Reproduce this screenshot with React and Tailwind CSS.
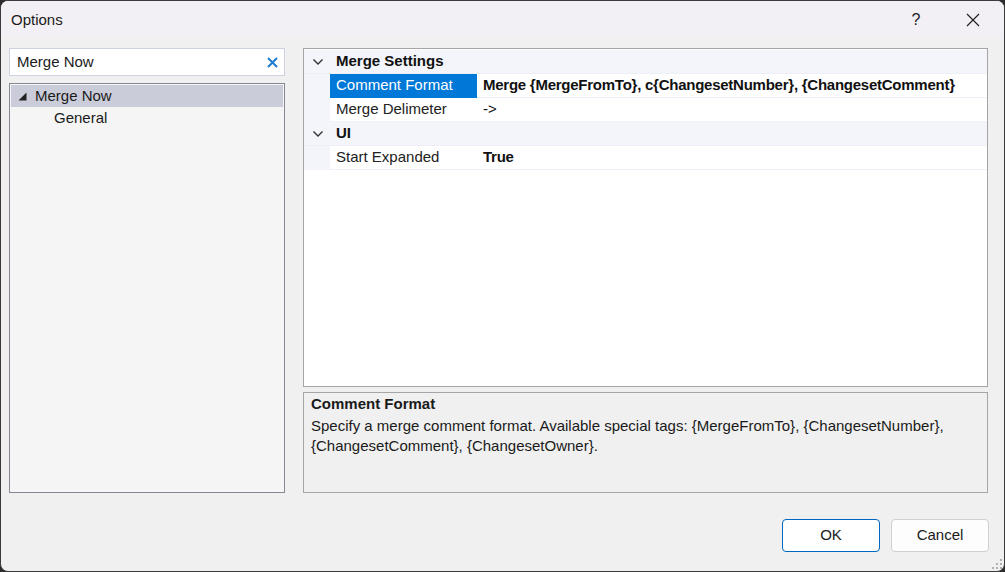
import React from 'react';

const FONT = { fontFamily: '"Liberation Sans", Arial, sans-serif' };

function Chevron() {
  return (
    <svg width="12" height="8" viewBox="0 0 12 8" className="text-[#333]">
      <path d="M1.5 1.5 L6 6 L10.5 1.5" fill="none" stroke="currentColor" strokeWidth="1.4" />
    </svg>
  );
}

function CategoryRow({ label }) {
  return (
    <div className="flex h-[24px] items-center bg-[#f3f5fa] border-b border-[#eceff6]">
      <div className="w-[26px] shrink-0 flex items-center justify-center pl-[2px]">
        <Chevron />
      </div>
      <div className="pl-[6px] font-bold text-[15px] text-[#111]">{label}</div>
    </div>
  );
}

function PropRow({ name, value, selected, bold }) {
  return (
    <div className="flex h-[24px] items-stretch">
      <div className="w-[26px] shrink-0 bg-[#f3f5fa]" />
      <div
        className={
          selected
            ? 'w-[147px] shrink-0 flex items-center pl-[6px] bg-[#0078d7] text-white border-b border-[#0078d7]'
            : 'w-[147px] shrink-0 flex items-center pl-[6px] text-[#222] border-b border-[#eef1f7]'
        }
      >
        {name}
      </div>
      <div
        className={
          'flex-1 flex items-center pl-[6px] border-b border-[#eef1f7] text-[#111] ' +
          (bold ? 'font-bold tracking-[-0.25px]' : '')
        }
      >
        {value}
      </div>
    </div>
  );
}

export default function App() {
  return (
    <div className="w-[1005px] h-[572px] bg-[#2b2b2b]" style={FONT}>
      <div className="w-full h-full rounded-[8px] border border-[#3a3a3a] bg-[#f0f0f0] overflow-hidden flex flex-col text-[15px] text-[#1a1a1a]">
        {/* title bar */}
        <div className="h-[37px] shrink-0 bg-[#f3f0f5] flex items-center pl-[10px]">
          <div className="flex-1 text-[15px] text-[#1a1a1a] pt-[1px]">Options</div>
          <div className="w-[46px] text-center text-[16px] text-[#222]">?</div>
          <div className="w-[46px] ml-[11px] mr-[8px] flex items-center justify-center">
            <svg width="14" height="14" viewBox="0 0 14 14">
              <path d="M1 1 L13 13 M13 1 L1 13" stroke="#222" strokeWidth="1.2" />
            </svg>
          </div>
        </div>

        {/* body */}
        <div className="flex-1 flex pl-[8px] pr-[16px] pt-[10px] gap-[18px]">
          {/* left column */}
          <div className="w-[276px] flex flex-col gap-[7px]">
            <div className="h-[28px] bg-white border border-[#cdd2e3] flex items-center pl-[7px] pr-[6px]">
              <div className="flex-1">Merge Now</div>
              <svg width="11" height="11" viewBox="0 0 11 11">
                <path d="M1 1 L10 10 M10 1 L1 10" stroke="#1f7ad0" strokeWidth="2" />
              </svg>
            </div>
            <div className="h-[410px] border border-[#858893] bg-[#f5f5f5] p-[1px]">
              <div className="h-[22px] bg-[#cbccd9] flex items-center pl-[7px]">
                <svg width="9" height="9" viewBox="0 0 9 9" className="mr-[8px]">
                  <path d="M8.5 0.5 L8.5 8.5 L0.5 8.5 Z" fill="#222" />
                </svg>
                <span>Merge Now</span>
              </div>
              <div className="h-[22px] flex items-center pl-[43px]">General</div>
            </div>
          </div>

          {/* right column */}
          <div className="flex-1 flex flex-col gap-[5px]">
            <div className="h-[339px] bg-white border border-[#a5a5a5] pt-[1px] flex flex-col">
              <CategoryRow label="Merge Settings" />
              <PropRow
                name="Comment Format"
                value="Merge {MergeFromTo}, c{ChangesetNumber}, {ChangesetComment}"
                selected
                bold
              />
              <PropRow name="Merge Delimeter" value="->" />
              <CategoryRow label="UI" />
              <PropRow name="Start Expanded" value="True" bold />
            </div>
            <div className="h-[101px] bg-[#f0f0f0] border border-[#a5a5a5] px-[7px] pt-[1px] leading-[20px]">
              <div className="font-bold">Comment Format</div>
              <div className="mt-[2px]">
                Specify a merge comment format. Available special tags: {'{MergeFromTo}'}, {'{ChangesetNumber}'},
                <br />
                {'{ChangesetComment}'}, {'{ChangesetOwner}'}.
              </div>
            </div>
          </div>
        </div>

        {/* footer */}
        <div className="h-[78px] shrink-0 relative flex items-start justify-end pr-[15px] pt-[26px] gap-[11px]">
          <button className="w-[98px] h-[33px] rounded-[4px] bg-white border border-[#0067c0] text-[15px] text-[#1a1a1a]">
            OK
          </button>
          <button className="w-[98px] h-[33px] rounded-[4px] bg-[#fdfdfd] border border-[#d0d0d0] text-[15px] text-[#1a1a1a]">
            Cancel
          </button>
          <svg width="10" height="10" viewBox="0 0 10 10" className="absolute right-[2px] bottom-[2px]">
            <rect x="8" y="0" width="2" height="2" fill="#b0b0b0" />
            <rect x="4" y="4" width="2" height="2" fill="#b0b0b0" />
            <rect x="8" y="4" width="2" height="2" fill="#b0b0b0" />
            <rect x="0" y="8" width="2" height="2" fill="#b0b0b0" />
            <rect x="4" y="8" width="2" height="2" fill="#b0b0b0" />
            <rect x="8" y="8" width="2" height="2" fill="#b0b0b0" />
          </svg>
        </div>
      </div>
    </div>
  );
}
